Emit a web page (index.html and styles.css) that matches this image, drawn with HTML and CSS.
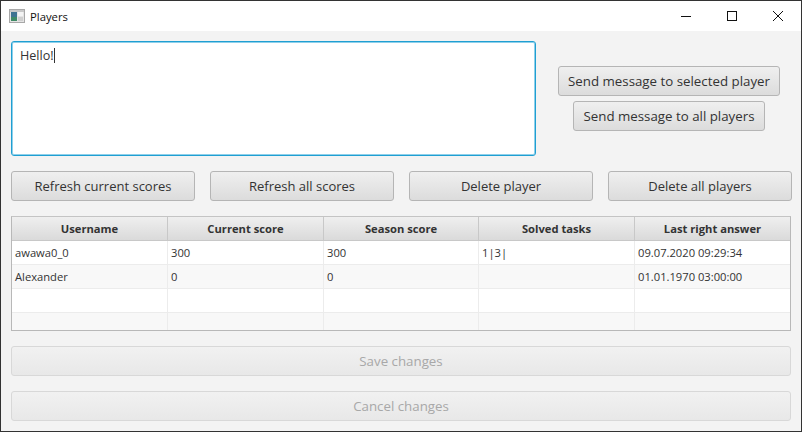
FILE: index.html

```html
<!DOCTYPE html>
<html lang="en">
<head>
    <meta charset="UTF-8">
    <meta name="viewport" content="width=device-width, initial-scale=1.0">
    <title>Players</title>
    <link rel="stylesheet" href="styles.css">
</head>
<body>
    <div class="window">
        <div class="titlebar">
            <svg class="app-icon" width="16" height="14" viewBox="0 0 16 14">
                <rect x="0.5" y="0.5" width="15" height="13" fill="#e4e4e4" stroke="#a8a8a8"/>
                <rect x="1" y="1" width="14" height="2" fill="#c8c8c8"/>
                <rect x="2" y="3" width="6" height="5" fill="#3f7391"/>
                <rect x="2" y="8" width="6" height="4" fill="#3f8a66"/>
                <rect x="9" y="3" width="5" height="4" fill="#f4f4f4"/>
                <rect x="9" y="8" width="5" height="4" fill="#cfcfcf"/>
            </svg>
            <span class="title">Players</span>
            <div class="controls">
                <svg width="46" height="30" viewBox="0 0 46 30"><path d="M18 15.5h10" stroke="#111" fill="none"/></svg>
                <svg width="46" height="30" viewBox="0 0 46 30"><rect x="18.5" y="10.5" width="9" height="9" stroke="#111" fill="none"/></svg>
                <svg width="46" height="30" viewBox="0 0 46 30"><path d="M18 10l10 10M28 10l-10 10" stroke="#111" fill="none"/></svg>
            </div>
        </div>
        <div class="content">
            <div class="message-row">
                <div class="message-box">Hello!<span class="caret"></span></div>
                <div class="send-buttons">
                    <button class="btn">Send message to selected player</button>
                    <button class="btn">Send message to all players</button>
                </div>
            </div>
            <div class="action-row">
                <button class="btn">Refresh current scores</button>
                <button class="btn">Refresh all scores</button>
                <button class="btn">Delete player</button>
                <button class="btn">Delete all players</button>
            </div>
            <div class="players-table">
                <div class="row head">
                    <div>Username</div>
                    <div>Current score</div>
                    <div>Season score</div>
                    <div>Solved tasks</div>
                    <div>Last right answer</div>
                </div>
                <div class="row">
                    <div>awawa0_0</div>
                    <div>300</div>
                    <div>300</div>
                    <div>1|3|</div>
                    <div>09.07.2020 09:29:34</div>
                </div>
                <div class="row odd">
                    <div>Alexander</div>
                    <div>0</div>
                    <div>0</div>
                    <div></div>
                    <div>01.01.1970 03:00:00</div>
                </div>
                <div class="row">
                    <div></div><div></div><div></div><div></div><div></div>
                </div>
                <div class="row odd last">
                    <div></div><div></div><div></div><div></div><div></div>
                </div>
            </div>
            <button class="btn wide" disabled>Save changes</button>
            <button class="btn wide" disabled>Cancel changes</button>
        </div>
    </div>
</body>
</html>
```

FILE: styles.css

```css
html, body {
    margin: 0;
    padding: 0;
}

body {
    font-family: "Open Sans", "Noto Sans", Arial, sans-serif;
    font-size: 13px;
    color: #333;
    background: #333;
}

.window {
    width: 800px;
    height: 430px;
    margin: 0 1px;
    padding: 1px 0;
    display: flex;
    flex-direction: column;
    overflow: hidden;
}

.titlebar {
    height: 30px;
    flex: none;
    background: #fff;
    display: flex;
    align-items: center;
    color: #111;
    font-size: 11.3px;
}

.app-icon {
    margin-left: 8px;
    margin-right: 5px;
}

.controls {
    margin-left: auto;
    display: flex;
}

.content {
    flex: 1;
    background: #f3f3f3;
    padding: 10px 9px 0 10px;
    display: flex;
    flex-direction: column;
}

.message-row {
    display: flex;
    align-items: center;
}

.message-box {
    width: 525px;
    height: 115px;
    box-sizing: border-box;
    flex: none;
    background: #fff;
    border: 1px solid #1f9fd2;
    box-shadow: inset 0 0 0 1px #8fd0ea;
    border-radius: 3px;
    padding: 5px 8px;
    font-size: 12.6px;
    line-height: 17px;
}

.caret {
    display: inline-block;
    width: 1px;
    height: 15px;
    background: #333;
    vertical-align: -3px;
}

.send-buttons {
    flex: 1;
    display: flex;
    flex-direction: column;
    align-items: center;
    gap: 5px;
    padding-left: 10px;
}

.btn {
    height: 30px;
    box-sizing: border-box;
    padding: 0 9px;
    border: 1px solid #b5b5b5;
    border-radius: 3px;
    background: linear-gradient(#efefef, #dcdcdc);
    font-family: inherit;
    font-size: 13.3px;
    color: #333;
}

.action-row {
    display: grid;
    grid-template-columns: repeat(4, 184px);
    column-gap: 15px;
    margin-top: 15px;
}

.action-row .btn {
    font-size: 13px;
}

.players-table {
    margin-top: 15px;
    width: 780px;
    box-sizing: border-box;
    border: 1px solid #b8b8b8;
    border-top-color: #c4c4c4;
    background: #fff;
    font-size: 11.2px;
}

.row {
    display: grid;
    grid-template-columns: 156px 156px 155px 156px 1fr;
    height: 24px;
    line-height: 23px;
}

.row > div {
    padding-left: 3px;
    border-right: 1px solid #ececec;
    border-bottom: 1px solid #ececec;
}

.row > div:last-child {
    border-right: none;
}

.row.odd {
    background: #f8f8f8;
}

.row.last {
    height: 17px;
}

.row.last > div {
    border-bottom: none;
}

.row.head {
    background: linear-gradient(#efefef, #d9d9d9);
    font-size: 11.2px;
    font-weight: 700;
}

.row.head > div {
    padding-left: 0;
    text-align: center;
    border-right-color: #c8c8c8;
    border-bottom-color: #c8c8c8;
}

.wide {
    width: 780px;
    flex: none;
    margin-top: 15px;
    border-color: #d8d8d8;
    background: linear-gradient(#f1f1f1, #e8e8e8);
    color: #a8a8a8;
}
```
